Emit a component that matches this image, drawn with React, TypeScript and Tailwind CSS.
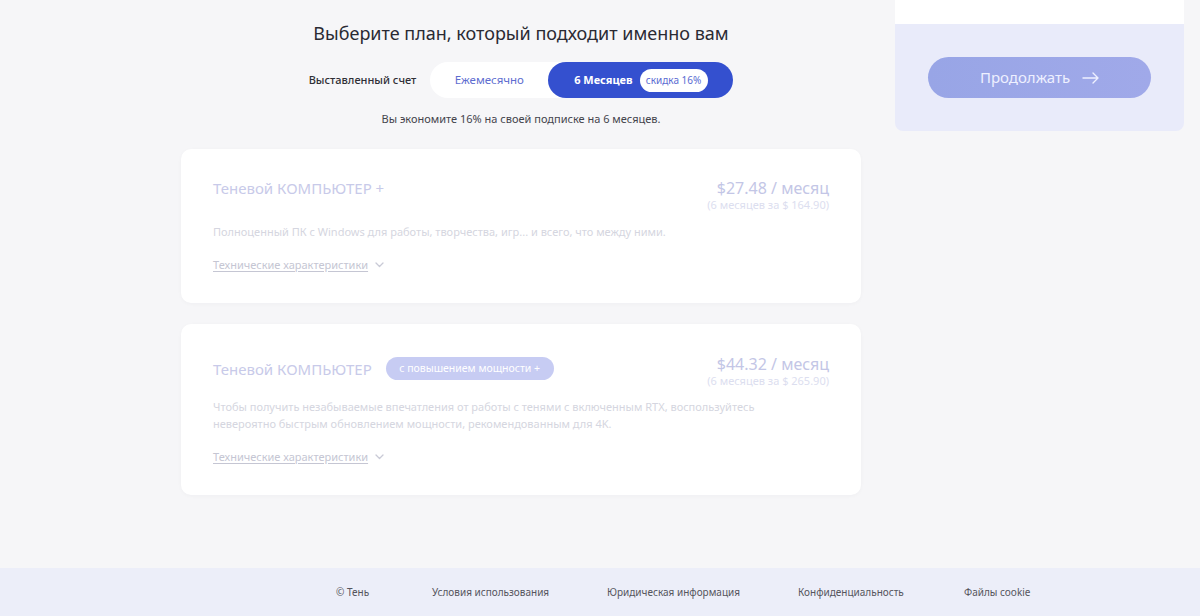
import React from "react";

const font = { fontFamily: '"Noto Sans", "Open Sans", Arial, sans-serif' };

function Chevron() {
  return (
    <svg width="9" height="6" viewBox="0 0 9 6" className="ml-[7px]" fill="none">
      <path d="M1 1l3.5 3.5L8 1" stroke="#c9cad6" strokeWidth="1.3" strokeLinecap="round" strokeLinejoin="round" />
    </svg>
  );
}

function Specs({ className }: { className: string }) {
  return (
    <div className={"flex items-center " + className}>
      <span className="text-[11px] leading-[16px] text-[#c5c6d3] underline underline-offset-2">Технические характеристики</span>
      <Chevron />
    </div>
  );
}

function Price({ amount, total }: { amount: string; total: string }) {
  return (
    <div className="flex flex-col items-end">
      <span className="text-[16px] leading-[20px] text-[#c3c6e6]">{amount} / месяц</span>
      <span className="text-[11px] leading-[14px] text-[#dcdeef]">(6 месяцев за {total})</span>
    </div>
  );
}

export default function App() {
  return (
    <div style={font} className="w-[1200px] h-[616px] bg-[#f6f6f8] flex flex-col overflow-hidden">
      <div className="flex-1 flex pl-[181px] gap-[34px]">
        {/* plan column */}
        <div className="w-[680px] flex flex-col items-center">
          <h1 className="mt-[21px] text-[18px] leading-[24px] text-[#2a2a33] font-normal">
            Выберите план, который подходит именно вам
          </h1>
          <div className="mt-[17px] flex items-center gap-[14px]">
            <span className="text-[11px] text-[#2f2f36] font-medium">Выставленный счет</span>
            <div className="h-[36px] w-[303px] bg-white rounded-full flex items-center">
              <div className="w-[118px] text-center text-[11.5px] text-[#5e6dd0]">Ежемесячно</div>
              <div className="h-[36px] w-[185px] rounded-full bg-[#3450cf] flex items-center justify-center gap-[7px]">
                <span className="text-[11px] font-bold text-white">6 Месяцев</span>
                <span className="h-[23px] w-[68px] rounded-full bg-white text-[10px] text-[#5a6bd2] flex items-center justify-center">
                  скидка 16%
                </span>
              </div>
            </div>
          </div>
          <p className="mt-[13px] text-[11px] leading-[16px] text-[#44444c]">
            Вы экономите 16% на своей подписке на 6 месяцев.
          </p>

          {/* plan cards */}
          <div className="mt-[22px] w-full flex flex-col gap-[21px]">
            <div className="bg-white rounded-[10px] shadow-[0_1px_4px_rgba(30,30,60,0.03)] h-[154px] px-[32px] pt-[29px]">
              <div className="flex justify-between items-start">
                <span className="text-[15px] leading-[20px] text-[#c8cae9]">Теневой КОМПЬЮТЕР +</span>
                <Price amount="$27.48" total="$ 164.90" />
              </div>
              <p className="mt-[11px] text-[11px] leading-[17px] text-[#d5d6e0]">
                Полноценный ПК с Windows для работы, творчества, игр... и всего, что между ними.
              </p>
              <Specs className="mt-[17px]" />
            </div>

            <div className="bg-white rounded-[10px] shadow-[0_1px_4px_rgba(30,30,60,0.03)] h-[171px] px-[32px] pt-[30px]">
              <div className="flex justify-between items-start">
                <div className="mt-[3px] flex items-center gap-[14px]">
                  <span className="text-[15px] leading-[20px] text-[#c8cae9]">Теневой КОМПЬЮТЕР</span>
                  <span className="h-[23px] w-[168px] rounded-full bg-[#c7ccf3] text-white text-[10.5px] flex items-center justify-center">
                    с повышением мощности +
                  </span>
                </div>
                <Price amount="$44.32" total="$ 265.90" />
              </div>
              <p className="mt-[10px] text-[11px] leading-[17px] text-[#d5d6e0]">
                Чтобы получить незабываемые впечатления от работы с тенями с включенным RTX, воспользуйтесь
                <br />
                невероятно быстрым обновлением мощности, рекомендованным для 4K.
              </p>
              <Specs className="mt-[17px]" />
            </div>
          </div>
        </div>

        {/* checkout panel */}
        <div className="w-[289px] self-start flex flex-col rounded-b-[8px] overflow-hidden">
          <div className="h-[24px] bg-white" />
          <div className="bg-[#e9ebfa] p-[33px]">
            <button className="h-[41px] w-[223px] rounded-full bg-gradient-to-r from-[#98a5e6] to-[#a0a9e9] text-[15px] text-[#eef0ff] flex items-center justify-center gap-[12px]">
              Продолжать
              <svg width="17" height="12" viewBox="0 0 17 12" fill="none">
                <path d="M1 6h15M11 1l5 5-5 5" stroke="#eef0ff" strokeWidth="1.4" strokeLinecap="round" strokeLinejoin="round" />
              </svg>
            </button>
          </div>
        </div>
      </div>

      <footer className="h-[48px] bg-[#eceef9] flex items-center pl-[336px] text-[10px] text-[#55555d]">
        <span className="w-[96px]">© Тень</span>
        <span className="w-[175px]">Условия использования</span>
        <span className="w-[191px]">Юридическая информация</span>
        <span className="w-[166px]">Конфиденциальность</span>
        <span>Файлы cookie</span>
      </footer>
    </div>
  );
}
